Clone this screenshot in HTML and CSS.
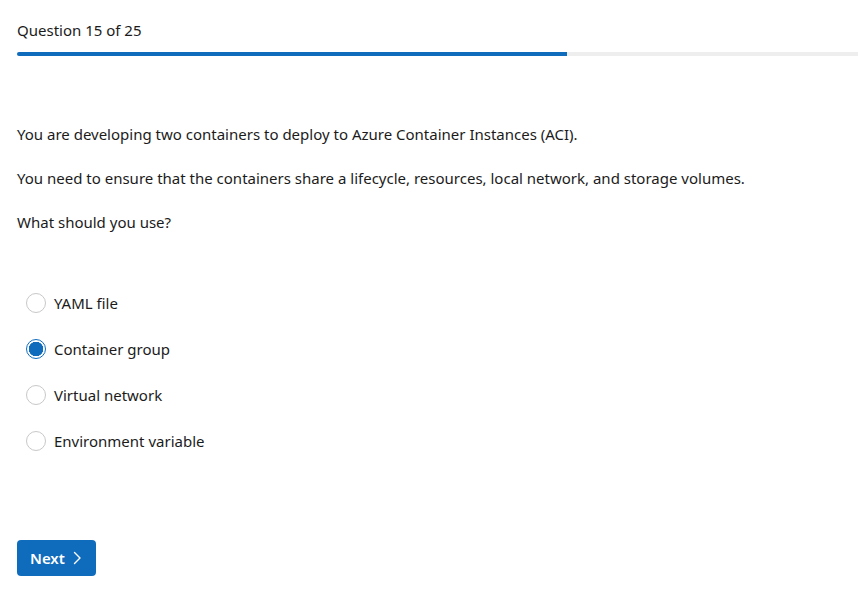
FILE: index.html
```html
<!DOCTYPE html>
<html lang="en">
<head>
<meta charset="utf-8">
<title>Question 15 of 25</title>
<link rel="stylesheet" href="styles.css">
</head>
<body>
<main class="quiz">
  <header class="quiz-header">
    <div class="counter">Question 15 of 25</div>
    <div class="progress"><div class="progress-fill" style="width: 65.4%"></div></div>
  </header>
  <section class="question">
    <p>You are developing two containers to deploy to Azure Container Instances (ACI).</p>
    <p>You need to ensure that the containers share a lifecycle, resources, local network, and storage volumes.</p>
    <p>What should you use?</p>
  </section>
  <fieldset class="options">
    <label class="option"><input type="radio" name="a"><span class="dot"></span><span>YAML file</span></label>
    <label class="option"><input type="radio" name="a" checked><span class="dot"></span><span>Container group</span></label>
    <label class="option"><input type="radio" name="a"><span class="dot"></span><span>Virtual network</span></label>
    <label class="option"><input type="radio" name="a"><span class="dot"></span><span>Environment variable</span></label>
  </fieldset>
  <button class="next" type="button">Next
    <svg width="12" height="14" viewBox="0 0 12 14" aria-hidden="true"><path d="M3.5 1.5 L9 7 L3.5 12.5" fill="none" stroke="#fff" stroke-width="1.4" stroke-linecap="round" stroke-linejoin="round"/></svg>
  </button>
</main>
</body>
</html>
```
FILE: styles.css
```css
html, body { margin: 0; padding: 0; background: #fff; }
body {
  font-family: "Segoe UI", "Noto Sans", "Open Sans", sans-serif;
  font-size: 15px;
  color: #1b1b1b;
  overflow: hidden;
}
.quiz { padding: 0 0 0 17px; }
.quiz-header { padding-top: 19px; }
.counter { line-height: 22px; height: 22px; }
.progress {
  margin-top: 11px;
  height: 4px;
  background: #eeeeee;
  border-radius: 2px 0 0 2px;
}
.progress-fill { height: 100%; background: #0f6cbd; border-radius: 2px 0 0 2px; }
.question { padding-top: 67px; }
.question p { margin: 0 0 22px; line-height: 22px; }
.options {
  border: 0;
  margin: 0;
  padding: 37px 0 0 0;
  display: flex;
  flex-direction: column;
  gap: 24px;
}
.option { display: flex; align-items: center; gap: 8px; padding-left: 9px; line-height: 22px; cursor: pointer; }
.option input { position: absolute; opacity: 0; width: 0; height: 0; margin: 0; }
.dot {
  width: 20px; height: 20px;
  border: 1px solid #c8c8c8;
  border-radius: 50%;
  box-sizing: border-box;
  flex: none;
  background: #fff;
}
.option input:checked + .dot {
  border: 1.5px solid #0f6cbd;
  background: radial-gradient(circle, #0f6cbd 0 7px, #fff 7.5px);
}
.next {
  margin-top: 88px;
  display: inline-flex;
  align-items: center;
  gap: 6px;
  height: 36px;
  width: 79px;
  padding: 0 0 0 13px;
  border: 0;
  border-radius: 4px;
  background: #0f6cbd;
  color: #fff;
  font: 600 15px "Segoe UI", "Noto Sans", "Open Sans", sans-serif;
}
```
